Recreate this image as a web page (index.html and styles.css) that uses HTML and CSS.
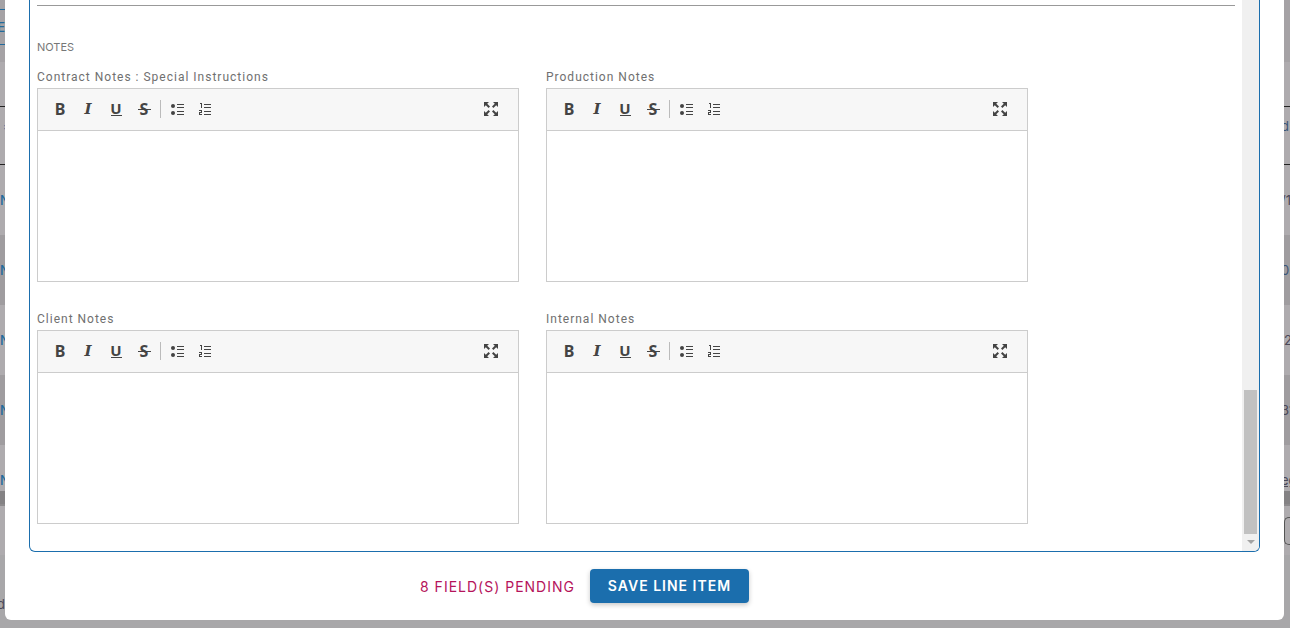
FILE: index.html
```html
<!DOCTYPE html>
<html lang="en">
<head>
<meta charset="utf-8">
<title>Line Item</title>
<link rel="stylesheet" href="styles.css">
</head>
<body>
<div class="page" aria-hidden="true">
  <div class="row top"></div>
  <div class="row tab"><span class="start">E</span></div>
  <div class="row strip"></div>
  <div class="row blank"></div>
  <div class="row head"><span class="inset">=</span><span class="edge blue">d</span></div>
  <div class="row data"><span>N</span><span class="edge">/1</span></div>
  <div class="row data dark"><span>N</span><span class="edge blue">0</span></div>
  <div class="row data"><span>N</span><span class="edge narrow">2</span></div>
  <div class="row data dark"><span>N</span><span class="edge">31</span></div>
  <div class="row data last"><span>N</span><span class="edge link">eg</span></div>
  <div class="row bar"></div>
  <div class="row pager"><span></span><span class="page-box"></span></div>
  <div class="row foot"><span class="start">d</span></div>
</div>

<main class="dialog" role="dialog" aria-label="Line item">
  <div class="frame">
    <div class="content">
      <hr class="rule">
      <h2 class="title">NOTES</h2>
      <div class="notes" id="notes"></div>
    </div>
    <div class="scrollbar" aria-hidden="true">
      <div class="thumb"></div>
      <svg class="arrow" width="17" height="17" viewBox="0 0 17 17"><path d="M5 6h8l-4 4z" fill="#a3a3a3"/></svg>
    </div>
  </div>
  <footer class="actions">
    <span class="pending">8 FIELD(S) PENDING</span>
    <button class="save" type="button">SAVE LINE ITEM</button>
  </footer>
</main>

<template id="editor">
  <section class="note">
    <label class="label"></label>
    <div class="editor">
      <div class="toolbar" role="toolbar">
        <button class="tool bold" type="button" aria-label="Bold">B</button>
        <button class="tool italic" type="button" aria-label="Italic">I</button>
        <button class="tool underline" type="button" aria-label="Underline">U</button>
        <button class="tool strike" type="button" aria-label="Strikethrough">S</button>
        <span class="divider"></span>
        <button class="tool" type="button" aria-label="Bullet list"><svg width="18" height="18" viewBox="0 0 18 18" fill="currentColor"><circle cx="4" cy="6" r="2"/><circle cx="4" cy="13" r="2"/><path d="M8 4h7v1H8zM8 7h7v1H8zM8 11h7v1H8zM8 14h7v1H8z"/></svg></button>
        <button class="tool" type="button" aria-label="Numbered list"><svg width="18" height="18" viewBox="0 0 18 18" fill="currentColor"><path d="M3 3h2v5H4V4H3zM2 10h3v3H3v1h2v1H2v-3h2v-1H2zM7 4h7v1H7zM7 7h7v1H7zM7 11h7v1H7zM7 14h7v1H7z"/></svg></button>
        <button class="tool expand" type="button" aria-label="Full screen"><svg width="18" height="18" viewBox="0 0 18 18" fill="currentColor"><path d="M2 2h5L5.200 3.800 8 6.600 6.600 8 3.800 5.200 2 7zM16 2v5l-1.800-1.800L11.400 8 10 6.600l2.800-2.800L11 2zM2 16v-5l1.800 1.800L6.600 10 8 11.400l-2.800 2.800L7 16zM16 16h-5l1.800-1.800L10 11.400l1.400-1.400 2.800 2.800L16 11z"/></svg></button>
      </div>
      <textarea class="area"></textarea>
    </div>
  </section>
</template>
<script src="notes.js"></script>
</body>
</html>
```

FILE: styles.css
```css
* { box-sizing: border-box; }

body {
  margin: 0;
  min-height: 100vh;
  position: relative;
  overflow: hidden;
  background: #a8a7a9;
  font-family: Inter, "Open Sans", sans-serif;
}

.page { font-size: 13px; color: #4b4857; }
.row { display: flex; justify-content: space-between; align-items: center; background: #aeabae; }
.row span { color: #226a9c; font-weight: 500; }
.row .edge { width: 9px; color: #4b4857; font-weight: 400; white-space: nowrap; }
.row .narrow { width: 6px; }
.row .blue { color: #3c5475; }
.row .link { text-decoration: underline; }
.row .start { display: flex; justify-content: flex-end; width: 5px; }
.row .inset { padding-left: 3px; }
.top { height: 9px; background: #a5a2a5; }
.tab { height: 36px; border: solid; border-width: 1px 0; border-image: linear-gradient(90deg, #226a9c 50%, #a5a2a5 50%) 1; background: #a5a2a5; }
.strip { height: 17px; background: #a5a2a5; }
.blank { height: 44px; }
.head { height: 59px; padding-bottom: 20px; border-top: 1px solid #222; border-bottom: 1px solid #222; }
.data { height: 70px; }
.dark { background: #9f9c9f; }
.data.last { height: 46px; padding-top: 24px; }
.bar { height: 13px; background: #848284; }
.pager { height: 51px; border-top: 2px solid #8c8a8c; }
.page-box { width: 6px; height: 28px; border: 1px solid #555; border-right: 0; border-radius: 5px 0 0 5px; }
.foot { height: 73px; padding-top: 24px; background: #a8a7a9; }
.row.foot span { color: #4b4857; font-weight: 400; }

.dialog {
  position: absolute;
  inset: 0 6px auto 5px;
  padding: 0 24px 17px;
  background: #fff;
  border-radius: 0 0 6px 6px;
}

.frame {
  display: flex;
  border: 1px solid #1b6ead;
  border-top: 0;
  border-radius: 0 0 6px 6px;
  overflow: hidden;
}
.content { flex: 1; min-width: 0; padding: 5px 7px 27px; }
.rule { margin: 0; border: 0; height: 1px; background: #999; }
.title { margin: 33px 0 13px; font-size: 11px; line-height: 16px; font-weight: 400; color: #777; }
.notes { display: grid; grid-template-columns: repeat(2, minmax(0, 482px)); gap: 28px 27px; }
.label { display: block; height: 20px; font: 400 12px/18px Roboto, sans-serif; letter-spacing: 1px; color: #707070; }
.editor { border: 1px solid #ccc; }
.toolbar { display: flex; align-items: center; height: 42px; padding: 0 13px 2px 8px; background: #f7f7f7; border-bottom: 1px solid #ccc; }
.tool { position: relative; display: grid; place-items: center; width: 28px; height: 28px; padding: 0; border: 0; background: none; color: #444; font: 700 16px/18px "Noto Sans", sans-serif; }
.italic { font: italic 700 15px/18px "DejaVu Serif", serif; }
.underline { font-size: 15px; padding-bottom: 2px; }
.underline::after, .strike::after { content: ""; position: absolute; height: 1px; background: #444; }
.underline::after { left: 9px; right: 8px; bottom: 7px; }
.strike::after { left: 8px; right: 7px; top: 14px; }
.divider { width: 1px; height: 18px; margin: 0 3px 0 2px; background: #bbb; }
.expand { margin-left: auto; }
.area { display: block; width: 100%; height: 150px; padding: 12px; border: 0; outline: 0; resize: none; font: inherit; }

.scrollbar { display: flex; flex-direction: column; justify-content: flex-end; width: 17px; background: #f0f0f0; }
.thumb { height: 144px; margin: 0 2px; background: #c1c1c1; }

.actions { display: flex; justify-content: center; align-items: center; gap: 15px; padding: 17px 120px 0 0; }
.pending { color: #b5145b; font-size: 14px; letter-spacing: 1px; }
.save { min-width: 159px; height: 34px; padding: 0 15px; border: 0; border-radius: 4px; background: #1b6ead; color: #fff; font: 600 14px/20px Inter, sans-serif; letter-spacing: 1px; box-shadow: 0 2px 5px rgba(0, 0, 0, .22); }
```

FILE: notes.js
```js
const names = ["Contract Notes : Special Instructions", "Production Notes", "Client Notes", "Internal Notes"];
const list = document.getElementById("notes");
const template = document.getElementById("editor");

names.forEach((name, i) => {
  const note = template.content.cloneNode(true);
  const label = note.querySelector("label");
  label.textContent = name;
  label.htmlFor = "note-" + i;
  note.querySelector("textarea").id = "note-" + i;
  list.append(note);
});
```
